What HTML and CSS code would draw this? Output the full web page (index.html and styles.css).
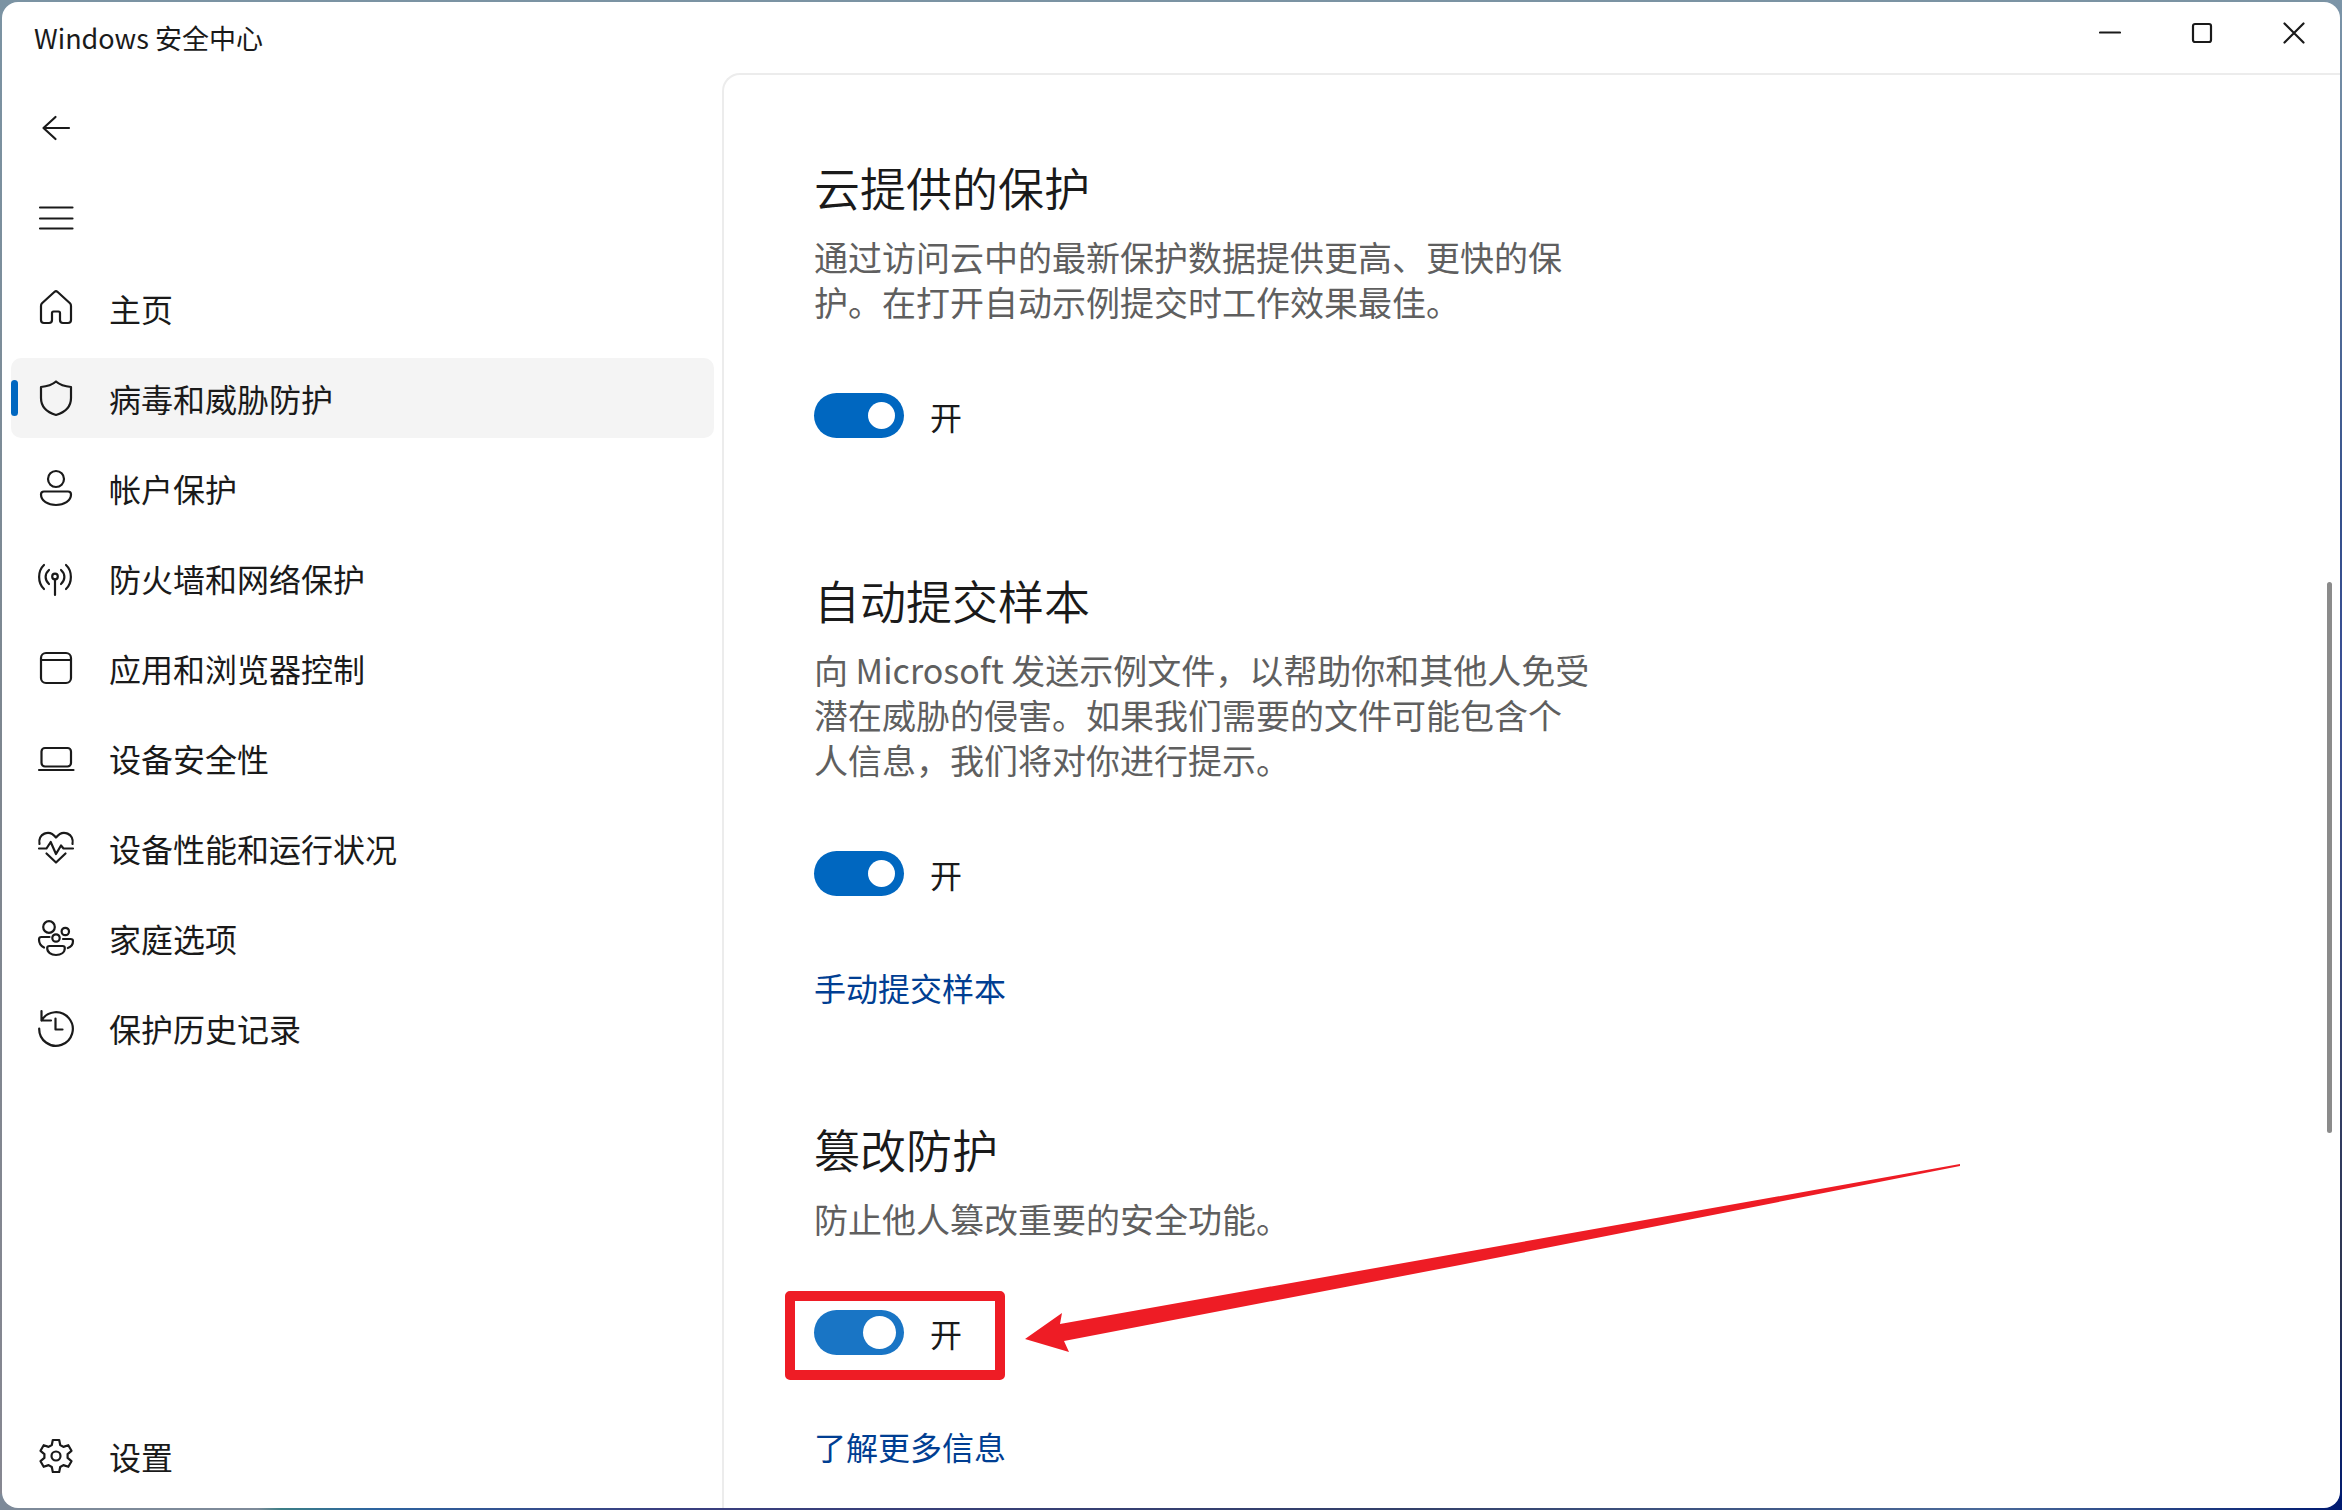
FILE: index.html
```html
<!DOCTYPE html>
<html lang="zh-CN">
<head>
  <meta charset="UTF-8" />
  <meta name="viewport" content="width=device-width, initial-scale=1.0"/>
  <title>Windows 安全中心</title>
  <link rel="stylesheet" href="styles.css">
</head>
<body>
  <div class="window">
    <header class="titlebar">
      <div class="title">Windows 安全中心</div>
      <div class="controls">
        <button type="button" aria-label="最小化"><svg viewBox="0 0 22 22"><path d="M1 10.500H21"/></svg></button>
        <button type="button" aria-label="最大化"><svg viewBox="0 0 22 22"><rect x="2" y="2" width="18" height="18" rx="2"/></svg></button>
        <button type="button" aria-label="关闭"><svg viewBox="0 0 22 22"><path d="M1.500 1.500L20.500 20.500M20.500 1.500L1.500 20.500"/></svg></button>
      </div>
    </header>

    <div class="container">
      <nav class="sidebar">
        <button type="button" class="nav-item" aria-label="返回">
          <svg class="icon" viewBox="0 0 36 36"><path d="M31 18H5.500M17.500 7L5.500 18L17.500 29"/></svg>
        </button>
        <button type="button" class="nav-item" aria-label="导航">
          <svg class="icon" viewBox="0 0 36 36"><path d="M2 7.500H34.500M2 18.500H34.500M2 28.500H34.500"/></svg>
        </button>
        <a href="#" class="nav-item">
          <svg class="icon" viewBox="0 0 36 36"><path d="M16.600 1.800L4 13.300Q3 14.300 3 16V30Q3 33 6 33H11Q14 33 14 30V23Q14 21.500 15.500 21.500H20.500Q22 21.500 22 23V30Q22 33 25 33H30Q33 33 33 30V16Q33 14.300 32 13.300L19.400 1.800Q18 0.600 16.600 1.800Z"/></svg>
          <span>主页</span>
        </a>
        <a href="#" class="nav-item active">
          <svg class="icon" viewBox="0 0 36 36"><path d="M18 1.500C14 5 9 6.500 3 7V18C3 26 8 32 18 35C28 32 33 26 33 18V7C27 6.500 22 5 18 1.500Z"/></svg>
          <span>病毒和威胁防护</span>
        </a>
        <a href="#" class="nav-item">
          <svg class="icon" viewBox="0 0 36 36"><circle cx="18" cy="9" r="8"/><path d="M6 21.500H30Q33 21.500 33 24.500C33 31 26 35 18 35S3 31 3 24.500Q3 21.500 6 21.500Z"/></svg>
          <span>帐户保护</span>
        </a>
        <a href="#" class="nav-item">
          <svg class="icon" viewBox="0 0 36 36"><circle cx="17" cy="16.500" r="2.800"/><path d="M17 19.500V35M6 5C-0.500 11 -0.500 23 6 29M11 10C6.500 14 6.500 20 11 24M28 5C34.500 11 34.500 23 28 29M23 10C27.500 14 27.500 20 23 24"/></svg>
          <span>防火墙和网络保护</span>
        </a>
        <a href="#" class="nav-item">
          <svg class="icon" viewBox="0 0 36 36"><rect x="3" y="3" width="30" height="30" rx="5"/><path d="M3 10H33"/></svg>
          <span>应用和浏览器控制</span>
        </a>
        <a href="#" class="nav-item">
          <svg class="icon" viewBox="0 0 36 36"><rect x="3.500" y="8" width="29.500" height="18.500" rx="3.500"/><path d="M1 30H35.500"/></svg>
          <span>设备安全性</span>
        </a>
        <a href="#" class="nav-item">
          <svg class="icon" viewBox="0 0 36 36"><path d="M1.500 14C-0.500 4 11 -1.500 18 7.500C25 -1.500 36.500 4 34.500 14M1 18.500H8.500L12.700 12L18 24L23 15.500L25.500 18.500H35M8.500 23.500L18 32.500L27.500 23.500"/></svg>
          <span>设备性能和运行状况</span>
        </a>
        <a href="#" class="nav-item">
          <svg class="icon" viewBox="0 0 36 36"><circle cx="11" cy="7" r="5.800"/><circle cx="27.300" cy="11.500" r="3.700"/><circle cx="18" cy="18" r="3.700"/><path d="M11.500 17H3.500Q1 17 1 19.500C1 23 3 26 6 27.500M25 19H32.500Q35 19 35 21C35 24.500 33 27 29.800 28M11.500 26H24.500Q26.800 26 26.800 28C26.800 32.500 23 35 18 35S9.200 32.500 9.200 28Q9.200 26 11.500 26Z"/></svg>
          <span>家庭选项</span>
        </a>
        <a href="#" class="nav-item">
          <svg class="icon" viewBox="0 0 36 36"><path d="M3.500 1V10.500H13M3.500 10.500A16.800 16.800 0 1 1 1.200 18.500M17.500 8.500V19.500H24.500"/></svg>
          <span>保护历史记录</span>
        </a>
        <a href="#" class="nav-item settings">
          <svg class="icon" viewBox="0 0 36 36"><path d="M14.800 2H21.200L22.200 7L25.400 8.900L30.300 7.200L33.500 12.800L29.600 16.100V19.900L33.500 23.200L30.300 28.800L25.400 27.100L22.200 29L21.200 34H14.800L13.800 29L10.600 27.100L5.700 28.800L2.500 23.200L6.400 19.900V16.100L2.500 12.800L5.700 7.200L10.600 8.900L13.800 7Z"/><circle cx="18" cy="18" r="4.500"/></svg>
          <span>设置</span>
        </a>
      </nav>

      <main class="main">
        <section>
          <h2>云提供的保护</h2>
          <p>通过访问云中的最新保护数据提供更高、更快的保护。在打开自动示例提交时工作效果最佳。</p>
          <div class="toggle-row">
            <input type="checkbox" class="toggle" id="cloud" checked>
            <label for="cloud">开</label>
          </div>
        </section>

        <section>
          <h2>自动提交样本</h2>
          <p>向 Microsoft 发送示例文件，以帮助你和其他人免受潜在威胁的侵害。如果我们需要的文件可能包含个人信息，我们将对你进行提示。</p>
          <div class="toggle-row">
            <input type="checkbox" class="toggle" id="sample" checked>
            <label for="sample">开</label>
          </div>
          <a href="#" class="link">手动提交样本</a>
        </section>

        <section>
          <h2>篡改防护</h2>
          <p>防止他人篡改重要的安全功能。</p>
          <div class="toggle-row">
            <input type="checkbox" class="toggle hover" id="tamper" checked>
            <label for="tamper">开</label>
            <div class="highlight"></div>
            <svg class="arrow" viewBox="0 0 936 190"><path d="M0 175L37 149L35 160L435 89L935 0V2L435 101L39 177L44 188Z"/></svg>
          </div>
          <a href="#" class="link">了解更多信息</a>
        </section>

        <div class="scroll-thumb"></div>
      </main>
    </div>
  </div>
</body>
</html>
```
FILE: styles.css
```css
:root {
  --accent: #0067c0;
  --accent-hover: #1975c5;
  --link: #003e92;
  --text: #1a1a1a;
  --muted: #5f5f5f;
  --line: #ececec;
  --mark: #ee1c25;
}
* {
  margin: 0;
  padding: 0;
  box-sizing: border-box;
}
body {
  font-family: "Noto Sans CJK SC", "Noto Sans", sans-serif;
  font-size: 32px;
  color: var(--text);
  height: 100vh;
  padding: 2px;
  /* wallpaper showing around the window */
  background:
    linear-gradient(to right, #7d8a99 11%, #3c7f86 12%, #2d64a0 16%, #3a3f80 28%, #33406a 60%, #4a6a9a 85%, #001a70) bottom / 100% 16px no-repeat,
    linear-gradient(to bottom, #7c95a8, #35508c 34%, #3a4f94 45%, #2e3550 85%, #001a70) right / 16px 100% no-repeat,
    linear-gradient(to bottom, #7b93a3, #7d868f 50%, #868791);
}
button {
  font: inherit;
  color: inherit;
  background: none;
  border: none;
}
a {
  text-decoration: none;
}
svg {
  fill: none;
  stroke: currentColor;
  stroke-width: 2.2;
  stroke-linecap: round;
  stroke-linejoin: round;
}
.window {
  height: 100%;
  display: flex;
  flex-direction: column;
  background: #fff;
  border-radius: 16px;
  overflow: hidden;
}
.titlebar {
  display: flex;
  justify-content: space-between;
  height: 71px;
}
.title {
  padding-left: 32px;
  font-size: 27px;
  line-height: 71px;
}
.controls {
  display: flex;
  height: 62px;
}
.controls button {
  width: 92px;
  display: flex;
  align-items: center;
  justify-content: center;
}
.controls svg {
  width: 22px;
  height: 22px;
}
.container {
  display: flex;
  flex: 1;
  min-height: 0;
}
.sidebar {
  width: 720px;
  flex-shrink: 0;
  display: flex;
  flex-direction: column;
  gap: 10px;
  padding: 15px 8px 12px 9px;
}
.nav-item {
  position: relative;
  display: flex;
  align-items: center;
  gap: 35px;
  height: 80px;
  padding: 0 27px;
  border-radius: 10px;
  color: var(--text);
}
.nav-item:hover, .nav-item.active {
  background: #f4f4f4;
}
.nav-item.active::before {
  content: "";
  position: absolute;
  left: 0;
  top: 22px;
  width: 7px;
  height: 36px;
  border-radius: 4px;
  background: var(--accent);
}
.icon {
  width: 36px;
  height: 36px;
  overflow: visible;
}
.settings {
  margin-top: auto;
}
.main {
  position: relative;
  flex: 1;
  display: flex;
  flex-direction: column;
  gap: 108px;
  padding: 81px 90px 0;
  border-top: 2px solid var(--line);
  border-left: 2px solid var(--line);
  border-top-left-radius: 18px;
}
.main h2 {
  margin-bottom: 18px;
  font-size: 46px;
  font-weight: 350;
  line-height: 60px;
}
.main p {
  max-width: 780px;
  margin-bottom: 69px;
  font-size: 34px;
  line-height: 45px;
  color: var(--muted);
}
.toggle-row {
  position: relative;
  display: flex;
  align-items: center;
  gap: 26px;
  height: 45px;
  margin-bottom: 23px;
}
.toggle {
  appearance: none;
  width: 90px;
  height: 45px;
  padding: 9px;
  display: flex;
  justify-content: flex-end;
  border-radius: 23px;
  background: var(--accent);
}
.toggle::before {
  content: "";
  width: 27px;
  height: 27px;
  border-radius: 50%;
  background: #fff;
}
.toggle.hover {
  padding: 6px 8px;
  background: var(--accent-hover);
}
.toggle.hover::before {
  width: 33px;
  height: 33px;
}
.link {
  display: inline-block;
  margin-top: 46px;
  line-height: 45px;
  color: var(--link);
}
.highlight {
  position: absolute;
  left: -29px;
  top: -19px;
  width: 220px;
  height: 89px;
  border: 10px solid var(--mark);
  border-radius: 5px;
  pointer-events: none;
}
.arrow {
  position: absolute;
  left: 211px;
  top: -146px;
  width: 936px;
  height: 190px;
  fill: var(--mark);
  stroke: none;
  pointer-events: none;
}
.scroll-thumb {
  position: absolute;
  right: 8px;
  top: 35.4%;
  width: 5px;
  height: 38.4%;
  border-radius: 3px;
  background: #8b8b8b;
}
```
